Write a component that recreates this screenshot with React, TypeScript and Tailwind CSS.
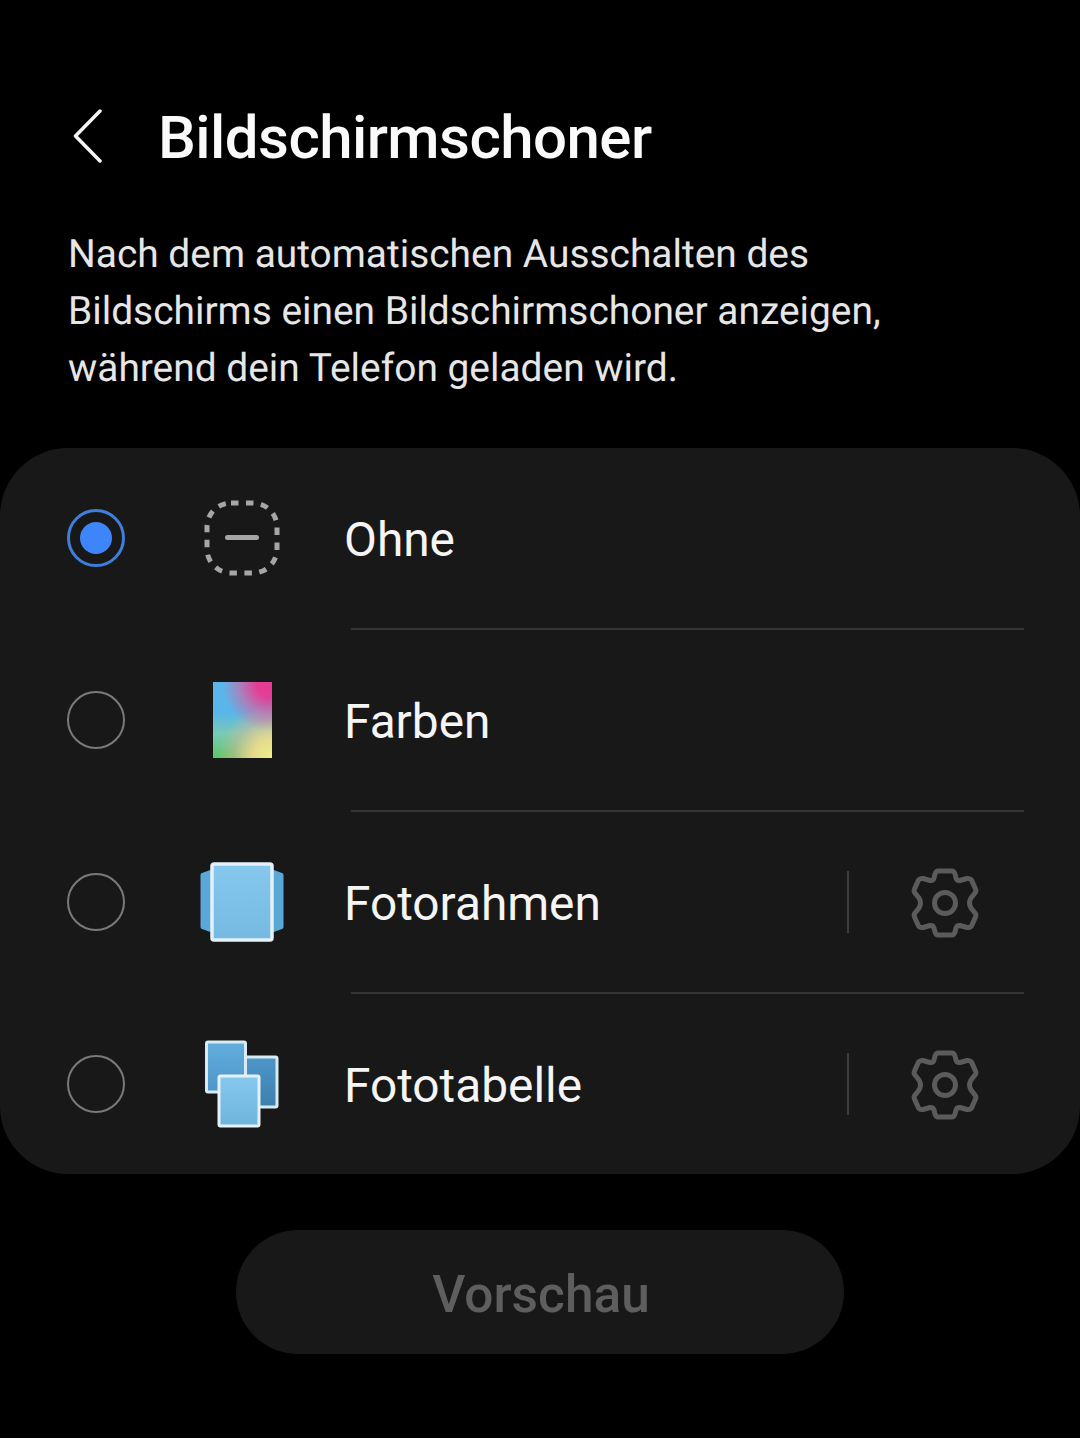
const options = [
  { key: "ohne", label: "Ohne", icon: <NoneIcon />, selected: true },
  { key: "farben", label: "Farben", icon: <ColorsIcon /> },
  { key: "rahmen", label: "Fotorahmen", icon: <FrameIcon />, settings: true },
  { key: "tabelle", label: "Fototabelle", icon: <TableIcon />, settings: true },
];

function NoneIcon() {
  return (
    <svg width="76" height="76" viewBox="0 0 76 76" fill="none">
      <rect x="3" y="3" width="70" height="70" rx="24" stroke="#a6a6a6" strokeWidth="5" strokeDasharray="7.500 7.500" />
      <path d="M23.500 37.500h29" stroke="#a6a6a6" strokeWidth="5" strokeLinecap="round" />
    </svg>
  );
}

function ColorsIcon() {
  return (
    <div className="h-[76px] w-[59px] bg-[radial-gradient(circle_at_95%_3%,#e63a94_0%,#e23f98_14%,rgba(230,90,150,0.55)_32%,rgba(230,90,150,0)_50%),radial-gradient(circle_at_100%_100%,#eef28a_0%,rgba(242,220,140,0.9)_20%,rgba(240,180,150,0.4)_40%,rgba(240,180,150,0)_56%),linear-gradient(180deg,#5db4ec_0%,#58b6ea_40%,#78cab4_68%,#60c668_100%)]" />
  );
}

function FrameIcon() {
  return (
    <svg width="86" height="80" viewBox="0 0 86 80" fill="none">
      <defs>
        <linearGradient id="frameFront" x1="0" y1="0" x2="0" y2="1">
          <stop offset="0" stopColor="#86c8ee" />
          <stop offset="1" stopColor="#76b9e0" />
        </linearGradient>
      </defs>
      <path d="M14 7 3 11a2 2 0 0 0-1.500 2v52a2 2 0 0 0 1.500 2l11 4z" fill="#5aa8d8" />
      <path d="M72 7l11 4a2 2 0 0 1 1.500 2v52a2 2 0 0 1-1.500 2l-11 4z" fill="#5aa8d8" />
      <rect x="13" y="2" width="60" height="76" rx="2" fill="url(#frameFront)" stroke="#e4f1f8" strokeWidth="3.500" />
    </svg>
  );
}

function TableIcon() {
  return (
    <svg width="76" height="88" viewBox="0 0 76 88" fill="none">
      <defs>
        <linearGradient id="tableBack" x1="0" y1="0" x2="0" y2="1">
          <stop offset="0" stopColor="#4d97c8" />
          <stop offset="1" stopColor="#3c7fae" />
        </linearGradient>
        <linearGradient id="tableMid" x1="0" y1="0" x2="0" y2="1">
          <stop offset="0" stopColor="#62aede" />
          <stop offset="1" stopColor="#4d96c8" />
        </linearGradient>
        <linearGradient id="tableFront" x1="0" y1="0" x2="0" y2="1">
          <stop offset="0" stopColor="#86c8ee" />
          <stop offset="1" stopColor="#6fb4dc" />
        </linearGradient>
      </defs>
      <rect x="32" y="17" width="41" height="50" rx="1.500" fill="url(#tableBack)" stroke="#d8eaf4" strokeWidth="3" />
      <rect x="2.500" y="2" width="39" height="50" rx="1.500" fill="url(#tableMid)" stroke="#d8eaf4" strokeWidth="3" />
      <rect x="15" y="36" width="40" height="50" rx="1.500" fill="url(#tableFront)" stroke="#e4f1f8" strokeWidth="3" />
    </svg>
  );
}

function GearIcon() {
  return (
    <svg className="mt-[1px]" width="68" height="70" viewBox="-34 -35 68 70" fill="none">
      <path
        d="M-7-32H7Q9-32 10-29L11-25Q12-22 15-22.500L22-24.500Q25-25 26.500-23L30.500-14Q31.500-12 30-10L26-5Q23 0 26 5L30 10Q31.500 12 30.500 14L26.500 23Q25 25 22 24.500L15 22.500Q12 22 11 25L10 29Q9 32 7 32H-7Q-9 32-10 29L-11 25Q-12 22-15 22.500L-22 24.500Q-25 25-26.500 23L-30.500 14Q-31.500 12-30 10L-26 5Q-23 0-26-5L-30-10Q-31.500-12-30.500-14L-26.500-23Q-25-25-22-24.500L-15-22.500Q-12-22-11-25L-10-29Q-9-32-7-32Z"
        stroke="#5b5b5b"
        strokeWidth="5"
        strokeLinejoin="round"
      />
      <circle cx="0" cy="0" r="10.500" stroke="#5b5b5b" strokeWidth="5" />
    </svg>
  );
}

function Radio({ selected }: { selected?: boolean }) {
  if (selected) {
    return (
      <div className="flex h-[58px] w-[58px] items-center justify-center rounded-full border-[3px] border-[#3f7fdc]">
        <div className="h-8 w-8 rounded-full bg-[#3e84fb]" />
      </div>
    );
  }
  return <div className="h-[58px] w-[58px] rounded-full border-[2.500px] border-[#7a7a7a]" />;
}

export default function App() {
  return (
    <div className="flex h-[1438px] w-[1080px] flex-col overflow-hidden bg-black font-['Roboto',sans-serif]">
      {/* Header */}
      <div className="mt-[97px] flex h-[82px] items-center pl-[73px]">
        <svg className="mb-[4px]" width="30" height="54" viewBox="0 0 30 54" fill="none">
          <path d="M27 2 2.500 27 27 52" stroke="#f5f5f5" strokeWidth="3.500" strokeLinecap="round" strokeLinejoin="round" />
        </svg>
        <h1 className="ml-[55px] text-[60px] leading-none font-medium tracking-[-0.55px] whitespace-nowrap text-[#fafafa]">
          Bildschirmschoner
        </h1>
      </div>

      <p className="mt-[47px] pl-[68px] text-[38.900px] leading-[57px] text-[#e6e6e6] [text-rendering:geometricPrecision]">
        Nach dem automatischen Ausschalten des
        <br />
        Bildschirms einen Bildschirmschoner anzeigen,
        <br />
        während dein Telefon geladen wird.
      </p>

      {/* Options */}
      <div className="mt-[51px] h-[726px] rounded-[68px] bg-[#181818]">
        {options.map((opt, i) => (
          <div key={opt.key}>
            {i > 0 && <div className="ml-[351px] mr-[56px] h-[2px] bg-[#343434]" />}
            <div className="flex h-[180px] items-center pl-[67px]">
              <Radio selected={opt.selected} />
              <div className="ml-[58px] flex w-[118px] justify-center">{opt.icon}</div>
              <span className="ml-[43px] pt-[6px] text-[47.800px] leading-none text-[#f5f5f5]">{opt.label}</span>
              {opt.settings && (
                <div className="ml-auto flex items-center pr-[101px]">
                  <div className="h-[62px] w-[2px] bg-[#3e3e3e]" />
                  <div className="ml-[62px]">
                    <GearIcon />
                  </div>
                </div>
              )}
            </div>
          </div>
        ))}
      </div>

      <button className="mx-auto mt-[56px] flex h-[124px] w-[608px] items-center justify-center rounded-full bg-[#181818] pt-[6px] pl-[2px] text-[51.400px] font-medium text-[#5e5e5e]">
        Vorschau
      </button>
    </div>
  );
}
